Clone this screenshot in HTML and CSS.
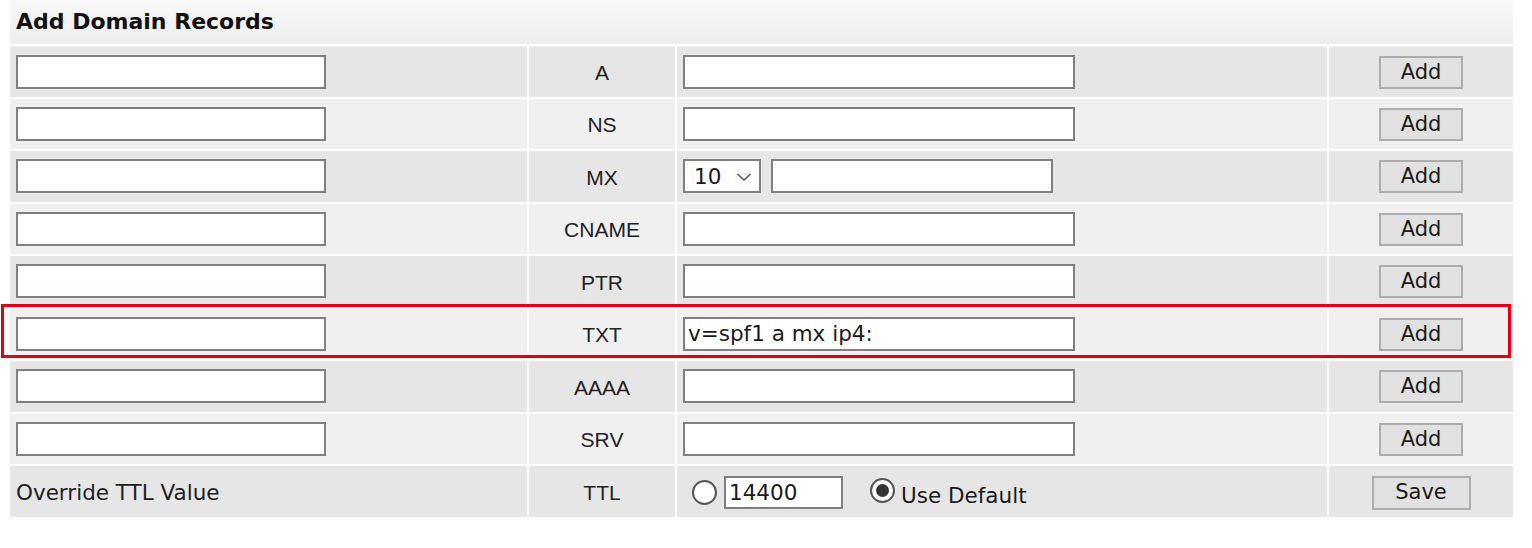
FILE: index.html
```html
<!DOCTYPE html>
<html>
<head>
<meta charset="utf-8">
<title>Add Domain Records</title>
<link rel="stylesheet" href="styles.css">
</head>
<body>
<div class="page">
  <table class="records">
    <colgroup>
      <col class="c-name">
      <col class="c-type">
      <col class="c-value">
      <col class="c-action">
    </colgroup>
    <tr class="head">
      <td colspan="4">Add Domain Records</td>
    </tr>
    <tr class="odd">
      <td class="name"><input class="field host" type="text"></td>
      <td class="type">A</td>
      <td class="value"><input class="field data" type="text"></td>
      <td class="action"><button class="btn add">Add</button></td>
    </tr>
    <tr class="even">
      <td class="name"><input class="field host" type="text"></td>
      <td class="type">NS</td>
      <td class="value"><input class="field data" type="text"></td>
      <td class="action"><button class="btn add">Add</button></td>
    </tr>
    <tr class="odd">
      <td class="name"><input class="field host" type="text"></td>
      <td class="type">MX</td>
      <td class="value">
        <div class="mx">
          <span class="selwrap">
            <select class="prio"><option>10</option></select>
            <svg class="chev" width="16" height="10" viewBox="0 0 16 10"><path d="M1.5 2 L8 8 L14.5 2" fill="none" stroke="#555" stroke-width="1.6"/></svg>
          </span>
          <input class="field mxhost" type="text">
        </div>
      </td>
      <td class="action"><button class="btn add">Add</button></td>
    </tr>
    <tr class="even">
      <td class="name"><input class="field host" type="text"></td>
      <td class="type">CNAME</td>
      <td class="value"><input class="field data" type="text"></td>
      <td class="action"><button class="btn add">Add</button></td>
    </tr>
    <tr class="odd">
      <td class="name"><input class="field host" type="text"></td>
      <td class="type">PTR</td>
      <td class="value"><input class="field data" type="text"></td>
      <td class="action"><button class="btn add">Add</button></td>
    </tr>
    <tr class="even">
      <td class="name"><input class="field host" type="text"></td>
      <td class="type">TXT</td>
      <td class="value"><input class="field data" type="text" value="v=spf1 a mx ip4:"></td>
      <td class="action"><button class="btn add">Add</button></td>
    </tr>
    <tr class="odd">
      <td class="name"><input class="field host" type="text"></td>
      <td class="type">AAAA</td>
      <td class="value"><input class="field data" type="text"></td>
      <td class="action"><button class="btn add">Add</button></td>
    </tr>
    <tr class="even">
      <td class="name"><input class="field host" type="text"></td>
      <td class="type">SRV</td>
      <td class="value"><input class="field data" type="text"></td>
      <td class="action"><button class="btn add">Add</button></td>
    </tr>
    <tr class="odd">
      <td class="name label">Override TTL Value</td>
      <td class="type">TTL</td>
      <td class="value">
        <div class="ttl">
          <input class="radio" type="radio" name="ttl">
          <input class="field ttlval" type="text" value="14400">
          <input class="radio use" type="radio" name="ttl" checked>
          <span class="deflabel">Use Default</span>
        </div>
      </td>
      <td class="action"><button class="btn save">Save</button></td>
    </tr>
  </table>
  <div class="highlight"></div>
</div>
</body>
</html>
```

FILE: styles.css
```css
html, body {
  margin: 0;
  padding: 0;
  background: #ffffff;
}

.page {
  position: relative;
  padding: 0 0 0 8px;
  font-family: "DejaVu Sans", Verdana, sans-serif;
  color: #1a1a1a;
}

.records {
  border-collapse: separate;
  border-spacing: 2px;
  table-layout: fixed;
  width: 1507px;
  margin-top: -2px;
}

.c-name { width: 517px; }
.c-type { width: 146px; }
.c-value { width: 650px; }
.c-action { width: 184px; }

.records td {
  padding: 0 6px;
  vertical-align: middle;
}

.head td {
  height: 44px;
  padding-bottom: 1px;
  background: linear-gradient(#f9f9f9, #ededed);
  font-weight: bold;
  font-size: 22px;
  color: #111;
  box-sizing: border-box;
}

.odd td { background: #e6e6e6; }
.even td { background: #f0f0f0; }

.odd td, .even td {
  height: 50.5px;
  box-sizing: border-box;
}

.head + .odd td { border-top: 1px solid #f4f4f4; }

.type {
  text-align: center;
  font-family: "Liberation Sans", Arial, sans-serif;
  font-size: 21px;
  color: #222;
  padding-top: 3px !important;
}

.label {
  font-size: 21.5px;
  color: #222;
  padding-top: 2px !important;
}

.action {
  text-align: center;
}

.field {
  box-sizing: border-box;
  height: 34px;
  border: 2px solid #808080;
  background: #ffffff;
  font-family: "DejaVu Sans", Verdana, sans-serif;
  font-size: 21.5px;
  color: #1a1a1a;
  padding: 0 3px;
  margin: 0;
  display: block;
  outline: none;
}

.host { width: 310px; }
.data { width: 392px; }

.mx {
  display: flex;
  align-items: center;
  gap: 10px;
}

.selwrap {
  position: relative;
  display: block;
  width: 78px;
  height: 34px;
}

.prio {
  -webkit-appearance: none;
  appearance: none;
  box-sizing: border-box;
  width: 78px;
  height: 34px;
  border: 2px solid #808080;
  background: #ffffff;
  font-family: "DejaVu Sans", Verdana, sans-serif;
  font-size: 21.5px;
  color: #1a1a1a;
  padding: 0 0 0 9px;
  margin: 0;
  border-radius: 0;
  outline: none;
}

.chev {
  position: absolute;
  left: 53px;
  top: 13px;
  pointer-events: none;
}

.mxhost { width: 282px; }

.btn {
  box-sizing: border-box;
  border: 2px solid #adadad;
  background: #e1e1e1;
  font-family: "DejaVu Sans", Verdana, sans-serif;
  font-size: 21px;
  color: #1a1a1a;
  margin: 0;
  padding: 0;
  border-radius: 0;
  line-height: 1;
}

.add {
  width: 84px;
  height: 33px;
  margin-top: 1px;
}

.save {
  width: 99px;
  height: 34px;
  margin-top: 3px;
}

.ttl {
  display: flex;
  align-items: center;
  padding-left: 9px;
  padding-top: 2px;
}

.radio {
  -webkit-appearance: none;
  appearance: none;
  box-sizing: border-box;
  width: 25px;
  height: 25px;
  margin: 0;
  border: 2px solid #555;
  border-radius: 50%;
  background: #ffffff;
  position: relative;
  flex: none;
  align-self: flex-start;
  margin-top: 4px;
}

.radio:checked::after {
  content: "";
  position: absolute;
  left: 4px;
  top: 4px;
  width: 13px;
  height: 13px;
  border-radius: 50%;
  background: #333;
}

.ttlval {
  width: 119px;
  height: 33px;
  margin-left: 7px;
  padding-left: 3px;
}

.use {
  margin-left: 27px;
  margin-top: 2px;
}

.deflabel {
  font-size: 21.5px;
  color: #1a1a1a;
  margin-left: 6px;
  padding-top: 6px;
}

.highlight {
  position: absolute;
  left: 1px;
  top: 306px;
  width: 1510px;
  height: 54px;
  box-sizing: border-box;
  border: 3px solid #e3000f;
  pointer-events: none;
}
```
